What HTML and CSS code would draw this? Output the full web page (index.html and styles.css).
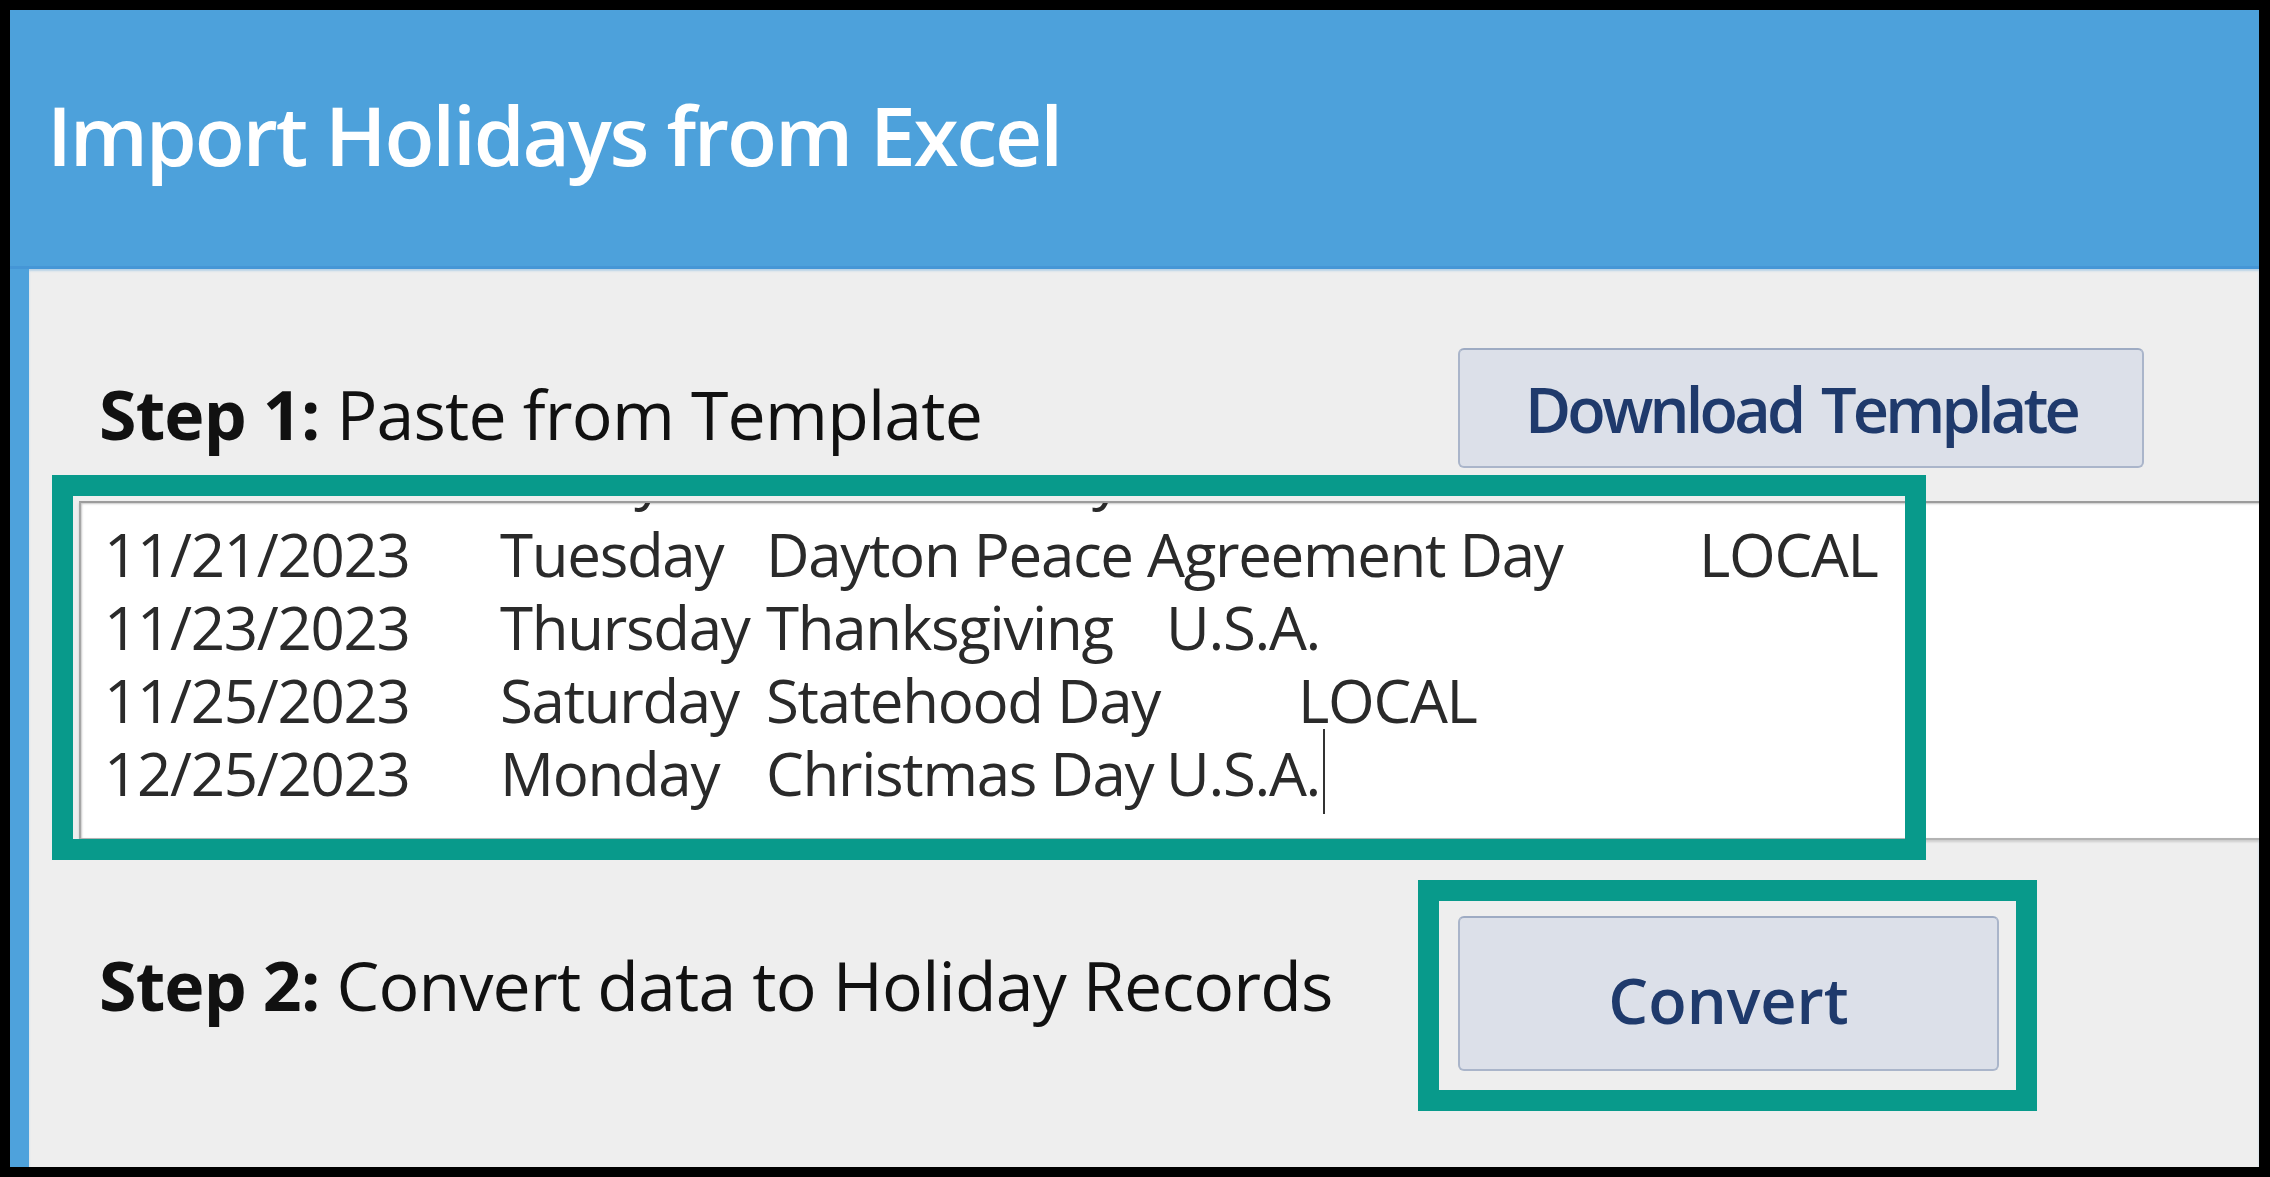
FILE: index.html
```html
<!DOCTYPE html>
<html lang="en">
<head>
<meta charset="utf-8">
<title>Import Holidays from Excel</title>
<link rel="stylesheet" href="styles.css">
</head>
<body>
<div class="frame">
  <header class="titlebar">
    <h1 class="title">Import Holidays from Excel</h1>
  </header>
  <main class="content">
    <div class="step-row step-row--one">
      <p class="step-label"><strong>Step 1:</strong> Paste from Template</p>
      <button class="btn btn--download" type="button">Download Template</button>
    </div>
    <div class="paste-box">
      <div class="paste-lines">
        <div class="line line--scrolled"><span class="col c-date">11/10/2023</span><span class="col c-day">Friday</span><span class="col c-name w3">Veterans Day</span><span>U.S.A.</span></div>
        <div class="line"><span class="col c-date">11/21/2023</span><span class="col c-day">Tuesday</span><span class="col c-name w7">Dayton Peace Agreement Day</span><span>LOCAL</span></div>
        <div class="line"><span class="col c-date">11/23/2023</span><span class="col c-day">Thursday</span><span class="col c-name w3">Thanksgiving</span><span>U.S.A.</span></div>
        <div class="line"><span class="col c-date">11/25/2023</span><span class="col c-day">Saturday</span><span class="col c-name w4">Statehood Day</span><span>LOCAL</span></div>
        <div class="line"><span class="col c-date">12/25/2023</span><span class="col c-day">Monday</span><span class="col c-name w3">Christmas Day</span><span>U.S.A.</span><span class="caret"></span></div>
      </div>
    </div>
    <div class="step-row step-row--two">
      <p class="step-label"><strong>Step 2:</strong> Convert data to Holiday Records</p>
      <button class="btn btn--convert" type="button">Convert</button>
    </div>
  </main>
  <div class="callout callout--paste"></div>
  <div class="callout callout--convert"></div>
</div>
</body>
</html>
```
FILE: styles.css
```css
* { box-sizing: border-box; }
html, body { margin: 0; padding: 0; }
body {
  width: 2270px;
  height: 1177px;
  overflow: hidden;
  background: #000;
  font-family: "Open Sans", "Noto Sans", sans-serif;
}
.frame {
  position: relative;
  width: 2270px;
  height: 1177px;
  border-style: solid;
  border-color: #000;
  border-width: 10px 11px 10px 10px;
  border-radius: 6px;
  background: #4ea2dc;
  display: flex;
  flex-direction: column;
  overflow: hidden;
}
.titlebar {
  flex: none;
  height: 259px;
  padding: 83px 0 0 37px;
  background: #4da1db;
  border-bottom: 3px solid #4596d6;
}
.title {
  margin: 0;
  font-size: 82px;
  line-height: 82px;
  font-weight: 600;
  color: #fff;
  letter-spacing: -2.2px;
}
.content {
  flex: 1;
  margin-left: 19px;
  background: #eeeeee;
  padding-top: 79px;
  overflow: hidden;
  box-shadow: inset 0 2px 2px rgba(120, 180, 225, 0.45);
}
.step-row {
  display: flex;
  padding-left: 70px;
}
.step-label {
  margin: 0;
  flex: none;
  width: 1359px;
  font-size: 68px;
  line-height: 102px;
  color: #111;
  letter-spacing: -0.8px;
  white-space: nowrap;
}
.step-label strong { font-weight: 700; }
.step-row--one {
  height: 120px;
  align-items: flex-end;
}
.step-row--one .step-label { line-height: 108px; }
.step-row--two {
  height: 155px;
  margin-top: 76px;
  align-items: center;
}
.step-row--two .step-label { margin-bottom: 18px; }
.btn {
  flex: none;
  margin: 0;
  padding: 0;
  font-family: inherit;
  font-weight: 600;
  font-size: 63px;
  color: #1f3a6c;
  background: #dce0e9;
  border: 2px solid #aab5ca;
  border-top-color: #9eabc3;
  border-radius: 6px;
  display: flex;
  align-items: center;
  justify-content: center;
  white-space: nowrap;
}
.btn--download {
  width: 686px;
  height: 120px;
  letter-spacing: -3.8px;
  word-spacing: 6px;
}
.btn--convert {
  width: 541px;
  height: 155px;
  padding-top: 12px;
}
.paste-box {
  margin: 33px 0 0 50px;
  height: 339px;
  background: #fff;
  border: 2px solid #b3b3b3;
  border-top-color: #9c9c9c;
  border-left-color: #a6a6a6;
  border-right: none;
  box-shadow: inset 1px 1px 2px rgba(0, 0, 0, 0.22), 0 2px 2px rgba(0, 0, 0, 0.14);
  overflow: hidden;
  padding-left: 23px;
}
.paste-lines {
  margin-top: -58px;
  font-size: 60px;
  line-height: 73px;
  letter-spacing: -1.3px;
  color: #2a2a2a;
  white-space: nowrap;
}
/* the textarea is scrolled: only the descenders of this row peek out */
.line--scrolled {
  position: relative;
  top: -6px;
}
.col { display: inline-block; }
.c-date { width: 396px; }
.c-day { width: 266px; }
.w3 { width: 400px; }
.w4 { width: 532px; }
.w7 { width: 933px; }
.caret {
  display: inline-block;
  width: 2px;
  height: 85px;
  margin-top: -10px;
  margin-left: 3px;
  vertical-align: -18px;
  background: #333;
}
.callout {
  position: absolute;
  border: 21px solid #089a8b;
  pointer-events: none;
}
.callout--paste {
  left: 42px;
  top: 465px;
  width: 1874px;
  height: 385px;
}
.callout--convert {
  left: 1408px;
  top: 870px;
  width: 619px;
  height: 231px;
}
```
